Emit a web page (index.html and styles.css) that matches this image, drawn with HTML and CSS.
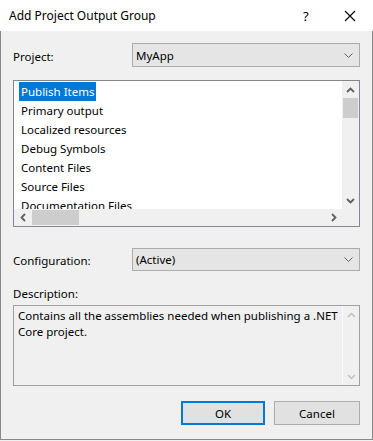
FILE: index.html
```html
<!DOCTYPE html>
<html lang="en">
<head>
  <meta charset="UTF-8">
  <title>Add Project Output Group</title>
  <link rel="stylesheet" href="styles.css">
</head>
<body>
  <div class="window">
    <div class="titlebar">
      <span class="title">Add Project Output Group</span>
      <span class="help">?</span>
      <span class="close">
        <svg width="12" height="12" viewBox="0 0 12 12"><path d="M1 1 L11 11 M11 1 L1 11" stroke="#000" stroke-width="1.1" fill="none"/></svg>
      </span>
    </div>

    <div class="content">
      <div class="field">
        <span class="label">Project:</span>
        <div class="combo">
          <span>MyApp</span>
          <svg class="chev" width="9" height="6" viewBox="0 0 9 6"><path d="M0.5 0.5 L4.5 4.5 L8.5 0.5" stroke="#606060" fill="none"/></svg>
        </div>
      </div>

      <div class="listbox">
        <ul class="items">
          <li class="selected"><span>Publish Items</span></li>
          <li><span>Primary output</span></li>
          <li><span>Localized resources</span></li>
          <li><span>Debug Symbols</span></li>
          <li><span>Content Files</span></li>
          <li><span>Source Files</span></li>
          <li><span>Documentation Files</span></li>
        </ul>
        <div class="vscroll">
          <div class="arrow">
            <svg width="9" height="6" viewBox="0 0 9 6"><path d="M1 5 L4.5 1.5 L8 5" stroke="#606060" stroke-width="1.8" fill="none"/></svg>
          </div>
          <div class="track"><div class="vthumb"></div></div>
          <div class="arrow">
            <svg width="9" height="6" viewBox="0 0 9 6"><path d="M1 1 L4.5 4.5 L8 1" stroke="#606060" stroke-width="1.8" fill="none"/></svg>
          </div>
        </div>
        <div class="hscroll">
          <div class="arrow">
            <svg width="6" height="9" viewBox="0 0 6 9"><path d="M5 1 L1.5 4.5 L5 8" stroke="#606060" stroke-width="1.8" fill="none"/></svg>
          </div>
          <div class="track"><div class="hthumb"></div></div>
          <div class="arrow">
            <svg width="6" height="9" viewBox="0 0 6 9"><path d="M1 1 L4.5 4.5 L1 8" stroke="#606060" stroke-width="1.8" fill="none"/></svg>
          </div>
        </div>
        <div class="corner"></div>
      </div>

      <div class="field config">
        <span class="label">Configuration:</span>
        <div class="combo">
          <span>(Active)</span>
          <svg class="chev" width="9" height="6" viewBox="0 0 9 6"><path d="M0.5 0.5 L4.5 4.5 L8.5 0.5" stroke="#606060" fill="none"/></svg>
        </div>
      </div>

      <div class="label desc-label">Description:</div>
      <div class="textbox">
        <p>Contains all the assemblies needed when publishing a .NET Core project.</p>
        <div class="vscroll disabled">
          <div class="arrow">
            <svg width="9" height="6" viewBox="0 0 9 6"><path d="M1 5 L4.5 1.5 L8 5" stroke="#c0c0c0" stroke-width="1.5" fill="none"/></svg>
          </div>
          <div class="track"></div>
          <div class="arrow">
            <svg width="9" height="6" viewBox="0 0 9 6"><path d="M1 1 L4.5 4.5 L8 1" stroke="#c0c0c0" stroke-width="1.5" fill="none"/></svg>
          </div>
        </div>
      </div>

      <div class="buttons">
        <button class="btn default">OK</button>
        <button class="btn">Cancel</button>
      </div>
    </div>
  </div>
</body>
</html>
```

FILE: styles.css
```css
* {
  margin: 0;
  padding: 0;
  box-sizing: border-box;
}

body {
  font-family: "Noto Sans", "Liberation Sans", sans-serif;
  font-size: 11.5px;
  color: #000;
  background: #f0f0f0;
}

.window {
  width: 373px;
  height: 440px;
  display: flex;
  flex-direction: column;
}

.titlebar {
  height: 31px;
  background: #fff;
  display: flex;
  align-items: center;
  padding-left: 9px;
}

.title {
  flex: 1;
  font-size: 12px;
}

.help {
  width: 24px;
  font-size: 13px;
}

.close {
  width: 46px;
  display: flex;
  justify-content: center;
  padding-top: 1px;
}

.content {
  flex: 1;
  border: 1px solid #888;
  border-top: none;
  padding: 12px 12px 0;
  display: flex;
  flex-direction: column;
}

.field {
  display: grid;
  grid-template-columns: 119px 1fr;
  align-items: center;
}

.label {
  padding-top: 2px;
}

.combo {
  height: 24px;
  background: #e5e5e5;
  border: 1px solid #acacac;
  display: flex;
  align-items: center;
  justify-content: space-between;
  padding: 0 6px 0 3px;
}

.chev {
  margin-top: 1px;
}

.listbox {
  margin-top: 13px;
  height: 147px;
  border: 1px solid #828790;
  background: #fff;
  display: grid;
  grid-template-columns: 1fr 17px;
  grid-template-rows: 1fr 17px;
  overflow: hidden;
}

.items {
  list-style: none;
  padding: 1px 0 0 5px;
  overflow: hidden;
}

.items li {
  height: 19px;
  line-height: 19px;
}

.items li span {
  padding: 0 2px;
  display: inline-block;
}

.items li.selected span {
  background: #0078d7;
  color: #fff;
}

.vscroll {
  background: #f0f0f0;
  display: flex;
  flex-direction: column;
}

.vscroll .arrow {
  height: 17px;
  display: flex;
  align-items: center;
  justify-content: center;
}

.vscroll .track {
  flex: 1;
}

.vthumb {
  height: 20px;
  margin: 0 1px;
  background: #cdcdcd;
}

.hscroll {
  background: #f0f0f0;
  display: flex;
}

.hscroll .arrow {
  width: 17px;
  display: flex;
  align-items: center;
  justify-content: center;
}

.hscroll .track {
  flex: 1;
  padding: 1px 0;
}

.hthumb {
  width: 47px;
  height: 100%;
  margin-left: 1px;
  background: #cdcdcd;
}

.corner {
  background: #f0f0f0;
}

.config {
  margin-top: 21px;
}

.config .combo {
  height: 23px;
}

.desc-label {
  margin-top: 13px;
  height: 21px;
}

.textbox {
  height: 81px;
  border: 1px solid #a0a0a0;
  display: grid;
  grid-template-columns: 1fr 17px;
}

.textbox p {
  padding: 2px 4px;
  line-height: 16px;
}

.textbox .vscroll {
  border-left: 1px solid #fafafa;
}

.buttons {
  margin-top: 15px;
  display: flex;
  justify-content: flex-end;
  gap: 9px;
}

.btn {
  width: 86px;
  height: 24px;
  background: #e1e1e1;
  border: 1px solid #adadad;
  font: inherit;
  color: #000;
}

.btn.default {
  width: 84px;
  border: 2px solid #0078d7;
}
```
